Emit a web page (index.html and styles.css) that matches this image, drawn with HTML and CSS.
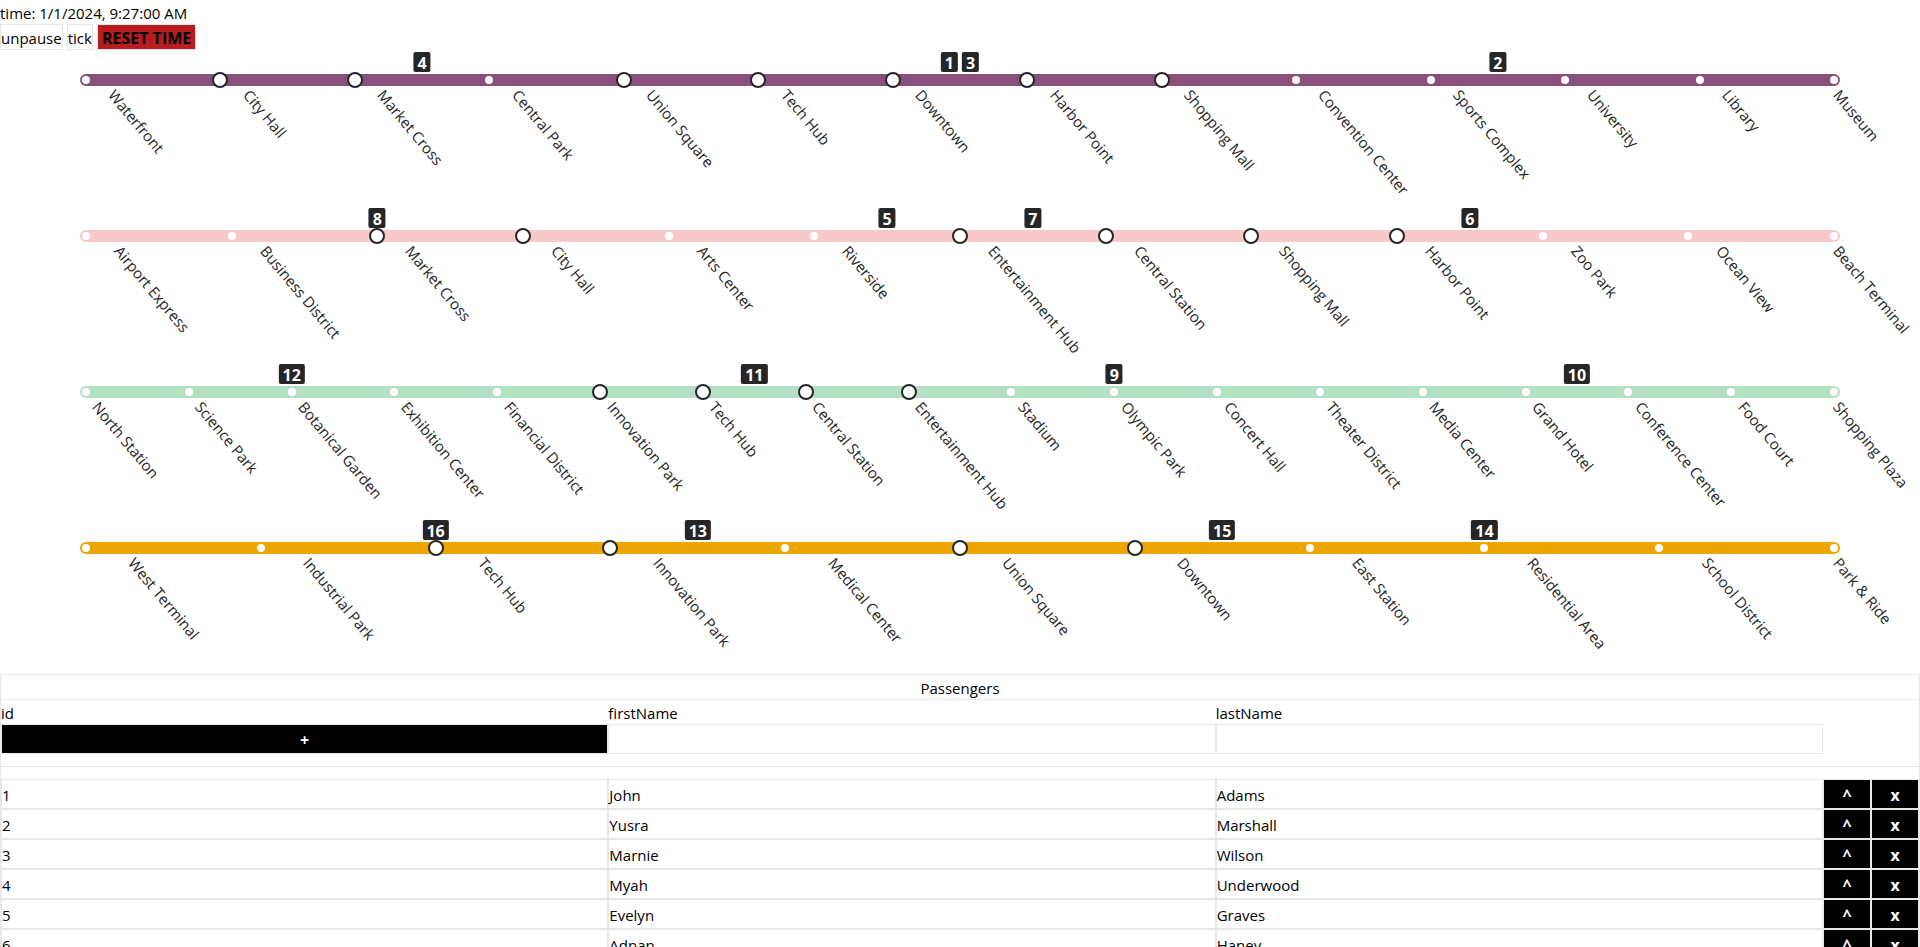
FILE: index.html
```html
<!DOCTYPE html>
<html lang="en">
<head>
<meta charset="utf-8">
<title>Metro</title>
<link rel="stylesheet" href="styles.css">
</head>
<body>
<header class="clock">
  <div class="time">time: 1/1/2024, 9:27:00 AM</div>
  <div class="controls">
    <button type="button" class="btn">unpause</button>
    <button type="button" class="btn">tick</button>
    <button type="button" class="btn btn-reset">RESET TIME</button>
  </div>
</header>

<main>
<section class="line purple">
  <div class="track">
    <ol class="stations">
      <li class="stop"><span class="label">Waterfront</span></li>
      <li class="stop hub"><span class="label">City Hall</span></li>
      <li class="stop hub"><span class="label">Market Cross</span></li>
      <li class="stop"><span class="label">Central Park</span></li>
      <li class="stop hub"><span class="label">Union Square</span></li>
      <li class="stop hub"><span class="label">Tech Hub</span></li>
      <li class="stop hub"><span class="label">Downtown</span></li>
      <li class="stop hub"><span class="label">Harbor Point</span></li>
      <li class="stop hub"><span class="label">Shopping Mall</span></li>
      <li class="stop"><span class="label">Convention Center</span></li>
      <li class="stop"><span class="label">Sports Complex</span></li>
      <li class="stop"><span class="label">University</span></li>
      <li class="stop"><span class="label">Library</span></li>
      <li class="stop"><span class="label">Museum</span></li>
    </ol>
    <div class="trains">
      <div class="spot" style="left: calc(100% * 2.5 / 13)"><span class="train">4</span></div>
      <div class="spot" style="left: calc(100% * 6.5 / 13)"><span class="train">1</span><span class="train">3</span></div>
      <div class="spot" style="left: calc(100% * 10.5 / 13)"><span class="train">2</span></div>
    </div>
  </div>
</section>

<section class="line pink">
  <div class="track">
    <ol class="stations">
      <li class="stop"><span class="label">Airport Express</span></li>
      <li class="stop"><span class="label">Business District</span></li>
      <li class="stop hub"><span class="label">Market Cross</span></li>
      <li class="stop hub"><span class="label">City Hall</span></li>
      <li class="stop"><span class="label">Arts Center</span></li>
      <li class="stop"><span class="label">Riverside</span></li>
      <li class="stop hub"><span class="label">Entertainment Hub</span></li>
      <li class="stop hub"><span class="label">Central Station</span></li>
      <li class="stop hub"><span class="label">Shopping Mall</span></li>
      <li class="stop hub"><span class="label">Harbor Point</span></li>
      <li class="stop"><span class="label">Zoo Park</span></li>
      <li class="stop"><span class="label">Ocean View</span></li>
      <li class="stop"><span class="label">Beach Terminal</span></li>
    </ol>
    <div class="trains">
      <div class="spot" style="left: calc(100% * 2 / 12)"><span class="train">8</span></div>
      <div class="spot" style="left: calc(100% * 5.5 / 12)"><span class="train">5</span></div>
      <div class="spot" style="left: calc(100% * 6.5 / 12)"><span class="train">7</span></div>
      <div class="spot" style="left: calc(100% * 9.5 / 12)"><span class="train">6</span></div>
    </div>
  </div>
</section>

<section class="line green">
  <div class="track">
    <ol class="stations">
      <li class="stop"><span class="label">North Station</span></li>
      <li class="stop"><span class="label">Science Park</span></li>
      <li class="stop"><span class="label">Botanical Garden</span></li>
      <li class="stop"><span class="label">Exhibition Center</span></li>
      <li class="stop"><span class="label">Financial District</span></li>
      <li class="stop hub"><span class="label">Innovation Park</span></li>
      <li class="stop hub"><span class="label">Tech Hub</span></li>
      <li class="stop hub"><span class="label">Central Station</span></li>
      <li class="stop hub"><span class="label">Entertainment Hub</span></li>
      <li class="stop"><span class="label">Stadium</span></li>
      <li class="stop"><span class="label">Olympic Park</span></li>
      <li class="stop"><span class="label">Concert Hall</span></li>
      <li class="stop"><span class="label">Theater District</span></li>
      <li class="stop"><span class="label">Media Center</span></li>
      <li class="stop"><span class="label">Grand Hotel</span></li>
      <li class="stop"><span class="label">Conference Center</span></li>
      <li class="stop"><span class="label">Food Court</span></li>
      <li class="stop"><span class="label">Shopping Plaza</span></li>
    </ol>
    <div class="trains">
      <div class="spot" style="left: calc(100% * 2 / 17)"><span class="train">12</span></div>
      <div class="spot" style="left: calc(100% * 6.5 / 17)"><span class="train">11</span></div>
      <div class="spot" style="left: calc(100% * 10 / 17)"><span class="train">9</span></div>
      <div class="spot" style="left: calc(100% * 14.5 / 17)"><span class="train">10</span></div>
    </div>
  </div>
</section>

<section class="line orange">
  <div class="track">
    <ol class="stations">
      <li class="stop"><span class="label">West Terminal</span></li>
      <li class="stop"><span class="label">Industrial Park</span></li>
      <li class="stop hub"><span class="label">Tech Hub</span></li>
      <li class="stop hub"><span class="label">Innovation Park</span></li>
      <li class="stop"><span class="label">Medical Center</span></li>
      <li class="stop hub"><span class="label">Union Square</span></li>
      <li class="stop hub"><span class="label">Downtown</span></li>
      <li class="stop"><span class="label">East Station</span></li>
      <li class="stop"><span class="label">Residential Area</span></li>
      <li class="stop"><span class="label">School District</span></li>
      <li class="stop"><span class="label">Park &amp; Ride</span></li>
    </ol>
    <div class="trains">
      <div class="spot" style="left: calc(100% * 2 / 10)"><span class="train">16</span></div>
      <div class="spot" style="left: calc(100% * 3.5 / 10)"><span class="train">13</span></div>
      <div class="spot" style="left: calc(100% * 6.5 / 10)"><span class="train">15</span></div>
      <div class="spot" style="left: calc(100% * 8 / 10)"><span class="train">14</span></div>
    </div>
  </div>
</section>

<section class="passengers">
  <h2 class="title">Passengers</h2>
  <table class="grid">
    <colgroup><col><col><col><col class="narrow"><col class="narrow"></colgroup>
    <thead>
      <tr class="names"><th scope="col">id</th><th scope="col" id="first">firstName</th><th scope="col" id="last">lastName</th><td colspan="2"></td></tr>
      <tr><td><button type="button" class="cell action">+</button></td><td><input class="cell" type="text" aria-labelledby="first"></td><td><input class="cell" type="text" aria-labelledby="last"></td><td colspan="2"></td></tr>
      <tr><td class="divider" colspan="5"></td></tr>
      <tr><td class="spacer" colspan="5"></td></tr>
    </thead>
    <tbody>
      <tr><td class="cell">1</td><td class="cell">John</td><td class="cell">Adams</td><td><button type="button" class="cell action">^</button></td><td><button type="button" class="cell action">x</button></td></tr>
      <tr><td class="cell">2</td><td class="cell">Yusra</td><td class="cell">Marshall</td><td><button type="button" class="cell action">^</button></td><td><button type="button" class="cell action">x</button></td></tr>
      <tr><td class="cell">3</td><td class="cell">Marnie</td><td class="cell">Wilson</td><td><button type="button" class="cell action">^</button></td><td><button type="button" class="cell action">x</button></td></tr>
      <tr><td class="cell">4</td><td class="cell">Myah</td><td class="cell">Underwood</td><td><button type="button" class="cell action">^</button></td><td><button type="button" class="cell action">x</button></td></tr>
      <tr><td class="cell">5</td><td class="cell">Evelyn</td><td class="cell">Graves</td><td><button type="button" class="cell action">^</button></td><td><button type="button" class="cell action">x</button></td></tr>
      <tr><td class="cell">6</td><td class="cell">Adnan</td><td class="cell">Haney</td><td><button type="button" class="cell action">^</button></td><td><button type="button" class="cell action">x</button></td></tr>
    </tbody>
  </table>
</section>
</main>
</body>
</html>
```
FILE: styles.css
```css
*, *::before, *::after { box-sizing: border-box; }

body {
  margin: 0;
  background: #fff;
  color: #000;
  font-family: "Segoe UI", "Open Sans", "Noto Sans", sans-serif;
  font-size: 15px;
  line-height: 24px;
}

button, input { font: inherit; color: inherit; margin: 0; padding: 0; border-radius: 0; }

.time { padding-top: 2px; line-height: 22px; }
.controls { display: flex; gap: 4px; }
.btn { height: 26px; border: 1px solid #e5e7eb; background: #fff; padding-top: 2px; line-height: 22px; }
.btn-reset { background: #b91c1c; font-size: 16px; font-weight: 700; padding: 2px 4px 0; }

.line { height: 156px; padding: 24px 80px 0; }
.purple { --line: #8b4f7d; }
.pink { --line: #f7c9cb; }
.green { --line: #b3dfc3; }
.orange { --line: #eea500; }

.track { position: relative; }

.stations {
  display: flex;
  height: 12px;
  margin: 0;
  padding: 0;
  list-style: none;
  background: var(--line);
  border-radius: 6px;
}

.stop { position: relative; flex: 1 1 0; display: flex; align-items: center; padding-left: 2px; }
.stop:last-child { flex: 0 0 12px; }
.stop::before { content: ""; flex: none; width: 8px; height: 8px; border-radius: 50%; background: #fff; }
.hub::before { width: 16px; height: 16px; margin: -2px -4px; border: 2px solid #262626; }

.label {
  position: absolute;
  top: 10px;
  left: calc(50% - 26px);
  color: #262626;
  white-space: nowrap;
  transform: rotate(50deg);
  transform-origin: top left;
}
.stop:last-child .label { left: 18px; }

.trains { position: absolute; top: -22px; left: 6px; right: 6px; }
.spot { position: absolute; top: 0; display: flex; gap: 4px; transform: translateX(-50%); }
.train {
  padding: 2px 4px 0;
  border-radius: 2px;
  background: #262626;
  color: #fff;
  font-size: 16px;
  font-weight: 700;
  line-height: 18px;
}

.passengers { border: 1px solid #e5e7eb; }
.title { margin: 0; padding-top: 2px; border-bottom: 1px solid #e5e7eb; font-size: 15px; font-weight: 400; line-height: 22px; text-align: center; }

.grid { width: 100%; table-layout: fixed; border-collapse: separate; border-spacing: 0; }
.grid td, .grid th { padding: 0; font-weight: 400; text-align: left; }
.narrow { width: 48px; }
.grid .names th { height: 24px; padding-top: 2px; line-height: 22px; }
.grid .cell { height: 30px; border: 1px solid #e5e7eb; padding-top: 2px; line-height: 26px; }
.grid button.cell, .grid input.cell { display: block; width: 100%; background: #fff; }
.grid button.action { background: #000; color: #fff; font-size: 16px; font-weight: 700; text-align: center; }
.grid .divider { height: 13px; border-bottom: 1px solid #e5e7eb; }
.grid .spacer { height: 12px; }
```
